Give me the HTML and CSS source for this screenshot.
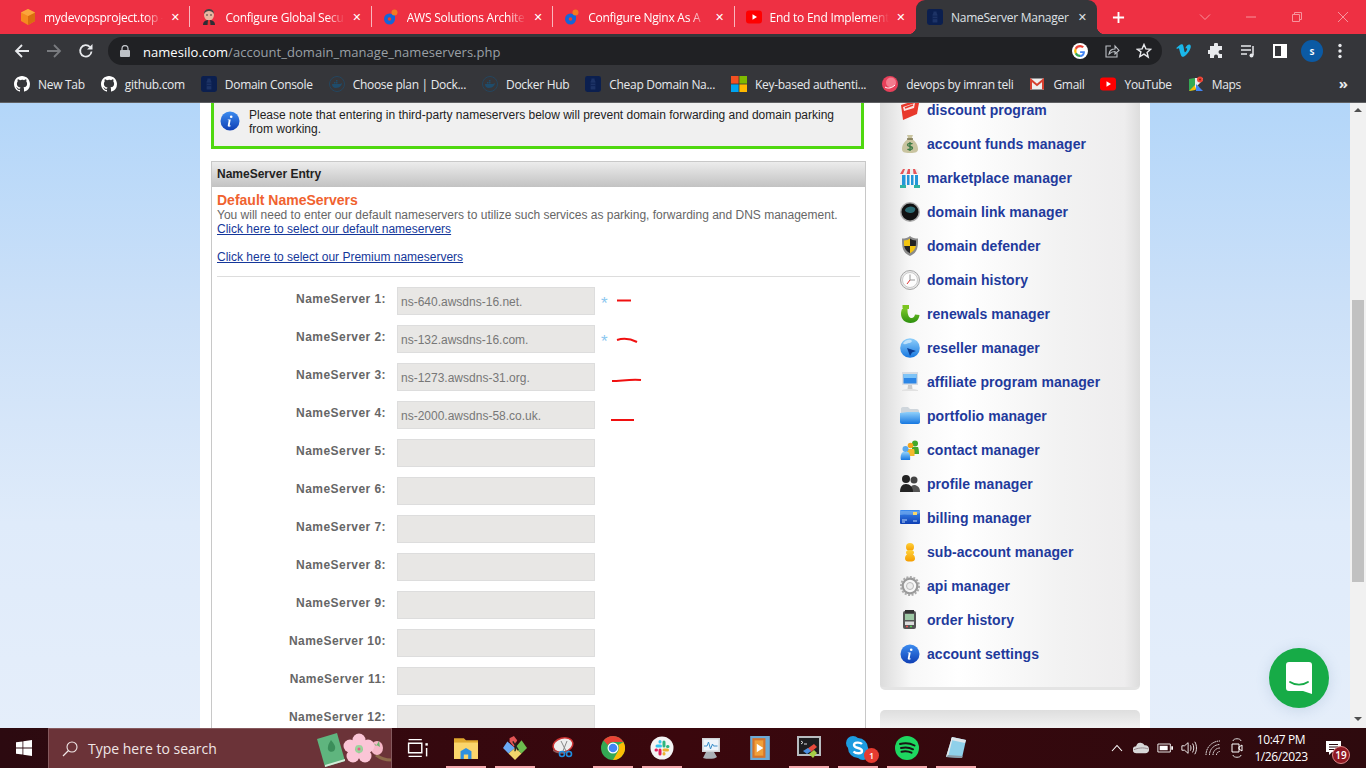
FILE: index.html
```html
<!DOCTYPE html>
<html lang="en">
<head>
<meta charset="utf-8">
<title>NameServer Manager</title>
<link rel="stylesheet" href="styles.css">
</head>
<body>
<svg class="defs" width="0" height="0" aria-hidden="true">
  <defs>
    <symbol id="silo" viewBox="0 0 20 20"><rect width="20" height="20" rx="3" fill="#0b1f4f"/><path d="M8 3h4v2l1 2v10H7V7l1-2z" fill="#1d3366"/><path d="M7 9h6M7 12h6" stroke="#0b1f4f"/></symbol>
    <symbol id="gh" viewBox="0 0 16 16"><path fill="#fff" d="M8 0C3.58 0 0 3.58 0 8c0 3.54 2.29 6.53 5.47 7.59.4.07.55-.17.55-.38v-1.34c-2.23.48-2.7-1.07-2.7-1.07-.36-.92-.89-1.17-.89-1.17-.73-.5.05-.49.05-.49.8.06 1.23.83 1.23.83.71 1.22 1.87.87 2.33.66.07-.52.28-.87.5-1.07-1.78-.2-3.64-.89-3.64-3.95 0-.87.31-1.59.82-2.15-.08-.2-.36-1.02.08-2.12 0 0 .67-.21 2.2.82A7.7 7.7 0 0 1 8 3.87c.68 0 1.36.09 2 .27 1.53-1.04 2.2-.82 2.2-.82.44 1.1.16 1.92.08 2.12.51.56.82 1.27.82 2.15 0 3.07-1.87 3.75-3.65 3.95.29.25.54.73.54 1.48v2.2c0 .21.15.46.55.38A8 8 0 0 0 16 8c0-4.42-3.58-8-8-8z"/></symbol>
    <symbol id="dock" viewBox="0 0 16 16"><circle cx="8" cy="8" r="7.500" fill="none" stroke="#24465f"/><path d="M3 8h8c1 0 1.500-1 2-1-.2 2-2 5-6 5-2.500 0-4-1.500-4-4z" fill="#1f4c6b"/><path d="M5 6h1.500v1.500H5zM7 6h1.500v1.500H7zM7 4h1.500v1.500H7z" fill="#1f4c6b"/></symbol>
    <symbol id="yt" viewBox="0 0 16 16"><rect y="1.500" width="16" height="13" rx="3" fill="#f00"/><path d="M6.500 5.200v5.600L11 8z" fill="#fff"/></symbol>
    <symbol id="dlogo" viewBox="0 0 16 16"><circle cx="6.500" cy="10" r="5.500" fill="#1565d8"/><circle cx="6.500" cy="10" r="1.800" fill="#e8412c"/><path d="M10 5h2v5h-2z" fill="#1565d8"/><circle cx="11.500" cy="3.500" r="3" fill="#f47b20"/></symbol>
    <linearGradient id="gblue" x1="0" y1="0" x2="0" y2="1"><stop offset="0" stop-color="#3c8cf0"/><stop offset="1" stop-color="#0f3fb4"/></linearGradient>
    <linearGradient id="gsky" x1="0" y1="0" x2="0" y2="1"><stop offset="0" stop-color="#8fd0fb"/><stop offset="1" stop-color="#1677e0"/></linearGradient>
    <linearGradient id="ggreen" x1="0" y1="0" x2="0" y2="1"><stop offset="0" stop-color="#8fd52f"/><stop offset="1" stop-color="#2c8f0e"/></linearGradient>
    <linearGradient id="gyel" x1="0" y1="0" x2="0" y2="1"><stop offset="0" stop-color="#ffd23b"/><stop offset="1" stop-color="#f59d00"/></linearGradient>
    <symbol id="info" viewBox="0 0 20 20"><circle cx="10" cy="10" r="9.500" fill="url(#gblue)"/><path d="M8 15.500c2 .5 3-.5 3-.5l-.4-.5c-.6.300-1 .2-.9-.4l1-5.600H7.800l-.1.500c1 .1 1 .3.900.9l-.8 4.300c-.1.800 0 1.100.2 1.300z" fill="#fff"/><circle cx="11.200" cy="5.800" r="1.300" fill="#fff"/></symbol>
  </defs>
</svg>

<header class="browser">
  <div class="tabstrip">
    <div class="tab">
      <svg class="fav" viewBox="0 0 16 16"><path d="M8 0l7 3.500v8.500L8 16l-7-4V3.500z" fill="#f58a1f"/><path d="M8 7l7-3.500V12l-7 4z" fill="#d96d10"/><path d="M8 7L1 3.500 8 0l7 3.500z" fill="#fba53c"/></svg>
      <span class="tab-title">mydevopsproject.top -</span>
      <span class="tab-x">✕</span>
    </div>
    <div class="tab">
      <svg class="fav" viewBox="0 0 16 16"><ellipse cx="8" cy="6" rx="5" ry="5.500" fill="#e8b6a0"/><path d="M3 5c0-4 3-5 5-5s5 1 5 5c-1-2-3-3-5-3S4 3 3 5z" fill="#444"/><path d="M2 16c0-4 3-5 6-5s6 1 6 5z" fill="#2d2d35"/><path d="M7 11h2l.5 5h-3z" fill="#d33"/><circle cx="6" cy="6" r=".8" fill="#333"/><circle cx="10" cy="6" r=".8" fill="#333"/></svg>
      <span class="tab-title">Configure Global Secu</span>
      <span class="tab-x">✕</span>
    </div>
    <div class="tab">
      <svg class="fav"><use href="#dlogo"/></svg>
      <span class="tab-title">AWS Solutions Archite</span>
      <span class="tab-x">✕</span>
    </div>
    <div class="tab">
      <svg class="fav"><use href="#dlogo"/></svg>
      <span class="tab-title">Configure Nginx As A</span>
      <span class="tab-x">✕</span>
    </div>
    <div class="tab tab-last">
      <svg class="fav"><use href="#yt"/></svg>
      <span class="tab-title">End to End Implement</span>
      <span class="tab-x">✕</span>
    </div>
    <div class="tab tab-active">
      <svg class="fav"><use href="#silo"/></svg>
      <span class="tab-title">NameServer Manager</span>
      <span class="tab-x">✕</span>
    </div>
    <svg class="newtab" viewBox="0 0 14 14"><path d="M7 1v12M1 7h12" stroke="#fff" stroke-width="2"/></svg>
    <div class="winctl">
      <svg viewBox="0 0 12 12"><path d="M1 3.500l5 5 5-5" fill="none" stroke="#f7939d"/></svg>
      <svg viewBox="0 0 12 12"><path d="M1 6h10" stroke="#f7939d"/></svg>
      <svg viewBox="0 0 12 12"><path d="M1.500 3.500h7v7h-7zM3.500 3.500v-2h7v7h-2" fill="none" stroke="#f7939d"/></svg>
      <svg viewBox="0 0 12 12"><path d="M1 1l10 10M11 1L1 11" stroke="#f7939d"/></svg>
    </div>
  </div>

  <div class="toolbar">
    <svg class="tb-btn" viewBox="0 0 16 16"><path d="M15 8H2M8 2L2 8l6 6" fill="none" stroke="#e8eaed" stroke-width="1.800"/></svg>
    <svg class="tb-btn" viewBox="0 0 16 16"><path d="M1 8h13M8 2l6 6-6 6" fill="none" stroke="#797b7f" stroke-width="1.800"/></svg>
    <svg class="tb-btn" viewBox="0 0 16 16"><path d="M13.500 8.500A5.700 5.700 0 1 1 12 4" fill="none" stroke="#e8eaed" stroke-width="1.800"/><path d="M14.500 1v5.500H9z" fill="#e8eaed"/></svg>
    <div class="omnibox">
      <svg class="lock" viewBox="0 0 10 12"><path d="M2 5V3.500a3 3 0 0 1 6 0V5" fill="none" stroke="#bdc1c6" stroke-width="1.300"/><rect y="5" width="10" height="7" rx="1" fill="#bdc1c6"/></svg>
      <span class="url"><b>namesilo.com</b>/account_domain_manage_nameservers.php</span>
      <svg class="omni-ico" viewBox="0 0 16 16"><circle cx="8" cy="8" r="8" fill="#fff"/><path d="M12.800 8.200H8.100v1.700h2.700c-.3 1.200-1.400 1.900-2.700 1.900V14c2.600 0 4.800-2 4.800-5 0-.3 0-.6-.1-.8z" fill="#4285f4"/><path d="M4.700 9.500A3.600 3.600 0 0 0 8.100 11.800V14a5.900 5.900 0 0 1-5.300-3.200z" fill="#34a853"/><path d="M2.800 5.200a5.900 5.900 0 0 0 0 5.600l1.900-1.300a3.600 3.600 0 0 1 0-3z" fill="#fbbc05"/><path d="M8.100 2a5.900 5.900 0 0 0-5.300 3.200l1.900 1.300a3.600 3.600 0 0 1 3.400-2.300c.9 0 1.700.3 2.300.9l1.600-1.600A5.800 5.800 0 0 0 8.100 2z" fill="#ea4335"/></svg>
      <svg class="omni-ico" viewBox="0 0 16 16"><path d="M7 3H2v11h11v-4" fill="none" stroke="#bdc1c6" stroke-width="1.100"/><path d="M5 11c.5-3.500 3-5 6-5V3l4 4.500L11 11V8.500c-2.500 0-4.500 1-6 2.500z" fill="none" stroke="#bdc1c6" stroke-width="1.100"/></svg>
      <svg class="omni-ico" viewBox="0 0 16 16"><path d="M8 1.500l1.900 4.400 4.800.4-3.600 3.100 1.100 4.700L8 11.100l-4.200 2.500 1.100-4.700L1.300 6.300l4.800-.4z" fill="none" stroke="#e8eaed" stroke-width="1.400"/></svg>
    </div>
    <div class="tb-right">
      <svg class="tb-btn" viewBox="0 0 16 16"><path d="M.3 5l.7 1c1-.7 1.500-.9 1.900-.5.800.8 1.400 7 3.200 8.200 1.800 1 6-3 8.200-8C16 2 13.500.2 11 2.500 10 3.500 9.500 4.500 9.300 5.500c1.300-.7 2.300-.3 1.700 1.300-.6 1.500-1.600 2.600-2.100 2.400-.8-.3-.9-6-2.300-7.600C5.500.3 2.500 3 .3 5z" fill="#1ab7ea"/></svg>
      <svg class="tb-btn" viewBox="0 0 16 16"><path d="M6 1.500a2 2 0 0 1 4 0V3h4v4h-1.500a2 2 0 0 0 0 4H14v4H10v-1.500a2 2 0 0 0-4 0V15H2v-4H.5a2 2 0 0 1 0-4H2V3h4z" fill="#e8eaed"/></svg>
      <svg class="tb-btn" viewBox="0 0 16 16"><path d="M1 3h10M1 7h10M1 11h6" stroke="#e8eaed" stroke-width="1.500"/><path d="M13 3v9" stroke="#e8eaed" stroke-width="1.500"/><circle cx="11.500" cy="12.500" r="2" fill="#e8eaed"/></svg>
      <svg class="tb-btn" viewBox="0 0 16 16"><path fill="#fff" d="M1 1h14v14H1z"/><path fill="#35363a" d="M3 3h6v10H3z"/></svg>
      <span class="avatar">S</span>
      <svg class="tb-btn" viewBox="0 0 16 16"><circle cx="8" cy="2.500" r="1.700" fill="#e8eaed"/><circle cx="8" cy="8" r="1.700" fill="#e8eaed"/><circle cx="8" cy="13.500" r="1.700" fill="#e8eaed"/></svg>
    </div>
  </div>

  <nav class="bookmarks">
    <a class="bm"><svg><use href="#gh"/></svg>New Tab</a>
    <a class="bm"><svg><use href="#gh"/></svg>github.com</a>
    <a class="bm"><svg><use href="#silo"/></svg>Domain Console</a>
    <a class="bm"><svg><use href="#dock"/></svg>Choose plan | Dock...</a>
    <a class="bm"><svg><use href="#dock"/></svg>Docker Hub</a>
    <a class="bm"><svg><use href="#silo"/></svg>Cheap Domain Na...</a>
    <a class="bm"><svg viewBox="0 0 16 16"><path fill="#f25022" d="M0 0h7.600v7.600H0z"/><path fill="#7fba00" d="M8.400 0H16v7.600H8.400z"/><path fill="#00a4ef" d="M0 8.400h7.600V16H0z"/><path fill="#ffb900" d="M8.400 8.400H16V16H8.400z"/></svg>Key-based authenti...</a>
    <a class="bm"><svg viewBox="0 0 16 16"><circle cx="8" cy="8" r="8" fill="#e8405a"/><circle cx="9" cy="6.500" r="5" fill="#f47c8e"/><path d="M3 11c3 2 7 1 10-2" stroke="#fff" fill="none"/></svg>devops by imran teli</a>
    <a class="bm"><svg viewBox="0 0 16 16"><path fill="#eee" d="M1 2.500h14v11H1z"/><path fill="none" stroke="#d6402f" stroke-width="2" d="M2 13.500V4l6 5 6-5v9.500"/></svg>Gmail</a>
    <a class="bm"><svg><use href="#yt"/></svg>YouTube</a>
    <a class="bm"><svg viewBox="0 0 16 16"><path fill="#34a853" d="M1 3l6-1v12l-6 1z"/><path fill="#fbbc05" d="M7 14l-6 1 7-7 3 3z"/><path fill="#e8eaed" d="M7 2l8 0v2L7 12z"/><path fill="#4285f4" d="M8 8l7 7H8z"/><circle cx="12" cy="3.500" r="3" fill="#ea4335"/><circle cx="12" cy="3.500" r="1" fill="#8a1c12"/></svg>Maps</a>
    <span class="bm-more">»</span>
  </nav>
</header>

<main class="page">
  <div class="viewport">
    <div class="sheet">
      <section class="content">
        <div class="notice">
          <svg class="notice-ico"><use href="#info"/></svg>
          <p>Please note that entering in third-party nameservers below will prevent domain forwarding and domain parking from working.</p>
        </div>
        <div class="entry">
          <h2 class="entry-head">NameServer Entry</h2>
          <div class="entry-body">
            <h3>Default NameServers</h3>
            <p>You will need to enter our default nameservers to utilize such services as parking, forwarding and DNS management.</p>
            <p><a>Click here to select our default nameservers</a></p>
            <p class="spaced"><a>Click here to select our Premium nameservers</a></p>
            <hr>
            <div class="ns-form">
              <label>NameServer 1:</label><div class="field">ns-640.awsdns-16.net.</div><span class="req">*</span>
              <label>NameServer 2:</label><div class="field">ns-132.awsdns-16.com.</div><span class="req">*</span>
              <label>NameServer 3:</label><div class="field">ns-1273.awsdns-31.org.</div><span></span>
              <label>NameServer 4:</label><div class="field">ns-2000.awsdns-58.co.uk.</div><span></span>
              <label>NameServer 5:</label><div class="field"></div><span></span>
              <label>NameServer 6:</label><div class="field"></div><span></span>
              <label>NameServer 7:</label><div class="field"></div><span></span>
              <label>NameServer 8:</label><div class="field"></div><span></span>
              <label>NameServer 9:</label><div class="field"></div><span></span>
              <label>NameServer 10:</label><div class="field"></div><span></span>
              <label>NameServer 11:</label><div class="field"></div><span></span>
              <label>NameServer 12:</label><div class="field"></div><span></span>
            </div>
          </div>
        </div>
      </section>

      <aside class="side">
        <ul class="menu">
          <li><svg viewBox="0 0 20 20"><path d="M1 5l16-5 2 3-2 11-14 6z" fill="#e8392c"/><path d="M3 7l12-4-1 5-10 3z" fill="#fff" opacity=".85"/><path d="M5 8l8-3" stroke="#e8392c" stroke-width="1.500"/></svg>discount program</li>
          <li><svg viewBox="0 0 20 20"><path d="M7 1h6l-1.500 4c4 2 6.500 6 6.500 10 0 3-2 4-8 4s-8-1-8-4c0-4 2.500-8 6.500-10z" fill="#c9c4a0"/><path d="M7 5h6" stroke="#77704a" stroke-width="1.500"/><path d="M12.500 10c-1-1-5-1-5 1s5 1 5 3-4 2-5 1M10 8v9" fill="none" stroke="#3e7a46" stroke-width="1.400"/></svg>account funds manager</li>
          <li><svg viewBox="0 0 20 20"><path d="M3 1h14l3 5H0z" fill="#eee"/><path d="M3 1h2L3 6H0zM8 1h2v5H6.500zM13 1h2l2 5h-3.500z" fill="#e6565a"/><path d="M2 7h3.500v10H2zM7 7h2.500v10H7zM11 7h2.500v10H11zM15 7h3v10h-3z" fill="#2496d8"/><path d="M0 17h6v3H0zM14 17h6v3h-6z" fill="#2fb3a3"/></svg>marketplace manager</li>
          <li><svg viewBox="0 0 20 20"><circle cx="10" cy="10" r="10" fill="#aaa"/><circle cx="10" cy="10" r="8.500" fill="#111"/><path d="M5 8a6 5 0 0 1 10-2c1 2-1 5-4 5S5 10 5 8z" fill="#2b6a72"/></svg>domain link manager</li>
          <li><svg viewBox="0 0 20 20"><path d="M10 0c2 2 5 2.500 8 2.500 0 8 0 14-8 17.500C2 16.500 2 10.500 2 2.500 5 2.500 8 2 10 0z" fill="#8b8b8b"/><path d="M10 2.500v7.500H4.200C4 8 4 6 4 4.400c2.500 0 4.500-.7 6-1.900zM10 10h5.800c-.5 3-2.300 5.200-5.800 7.200z" fill="#f2c40f"/><path d="M10 2.500c1.500 1.200 3.500 1.900 6 1.900 0 2 0 4-.2 5.600H10zM4.200 10H10v7.200C6.500 15.200 4.700 13 4.200 10z" fill="#222"/></svg>domain defender</li>
          <li><svg viewBox="0 0 20 20"><circle cx="10" cy="10" r="9.500" fill="#e8e8e8" stroke="#a5a5a5"/><circle cx="10" cy="10" r="7.500" fill="#fdfdfd" stroke="#ccc"/><path d="M10 4.500V10h5" stroke="#999" fill="none"/><path d="M10 10l-3 4" stroke="#d33"/></svg>domain history</li>
          <li><svg viewBox="0 0 20 20"><path d="M3 1h6v4H7.500v1.500c0 5 2 7.500 4 7.500s3-1.500 3.500-3.500l4.500.5C19 16 15.500 19 10.500 19 5 19 1 15 1 10c0-2 .5-4 1-5H3z" fill="url(#ggreen)"/><path d="M2.500 1H9v3.500H2.500z" fill="#7bc41f"/></svg>renewals manager</li>
          <li><svg viewBox="0 0 20 20"><circle cx="10" cy="10" r="9.800" fill="url(#gsky)"/><path d="M3 5c2-3 6-4 8-3 2 1 0 3-2 3S5 8 3 5z" fill="#cfeafd" opacity=".8"/><path d="M7 10l9 3-4 1.500L10 18z" fill="#0a3d94"/></svg>reseller manager</li>
          <li><svg viewBox="0 0 20 20"><path d="M2 0h16v13H2z" fill="#d8dce2"/><path d="M3.500 2h13v9.500h-13z" fill="#2c86e6"/><path d="M3.500 2h13v4h-13z" fill="#7ec4f7"/><path d="M8 13h4l.5 4h-5z" fill="#ccc"/><path d="M2 18c2-1.500 14-1.500 16 0v1H2z" fill="#e2e2e2"/></svg>affiliate program manager</li>
          <li><svg viewBox="0 0 20 20"><path d="M1 3c0-1 .5-2 2-2h5l2 2h7c1.500 0 2 1 2 2v11c0 1-.5 2-2 2H3c-1 0-2-1-2-2z" fill="#cfd6dc"/><path d="M0 7c3 0 5-1 7-1h11c1 0 2 .5 2 2v8c0 1-1 2-2 2H2c-1 0-2-1-2-2z" fill="url(#gsky)"/></svg>portfolio manager</li>
          <li><svg viewBox="0 0 20 20"><circle cx="15" cy="3.500" r="3" fill="#43a82b"/><path d="M12 7h6c1 2 1 6 1 7h-7z" fill="#43a82b"/><circle cx="10.500" cy="5.500" r="2.800" fill="#f4a61d"/><path d="M7 9h7c1 2 .5 6 .5 7H7z" fill="#f4b92d"/><circle cx="5.500" cy="9" r="3" fill="#5aa9ee"/><path d="M1 20c-1-3 0-7 2-8h5c2 1 2.500 5 2 8z" fill="url(#gsky)"/></svg>contact manager</li>
          <li><svg viewBox="0 0 20 20"><circle cx="6" cy="5" r="4" fill="#222"/><circle cx="14" cy="6" r="3.500" fill="#444"/><path d="M10 18c0-4 1-7 4-7 3 0 6 2 6 7z" fill="#555"/><path d="M0 18c0-5 2-8 6-8s7 3 7 8z" fill="#222"/></svg>profile manager</li>
          <li><svg viewBox="0 0 20 20"><rect y="2" width="20" height="14" rx="1" fill="url(#gblue)"/><path d="M0 7c6-2 12 2 20-2v-2H0z" fill="#7fb2ee" opacity=".6"/><rect x="13" y="4" width="4" height="3" fill="#f6d76b"/><path d="M2 12h5M2 14h3M13 13h4" stroke="#bcd6f8"/></svg>billing manager</li>
          <li><svg viewBox="0 0 20 20"><circle cx="10" cy="5" r="4" fill="url(#gyel)"/><path d="M10 8c-3 0-4 1-4 2.500 0 1 .5 1.500 1 2-1.500 1-2 2.500-2 4 0 2.500 2 3 5 3s5-.5 5-3c0-1.500-.5-3-2-4 .5-.5 1-1 1-2C14 9 13 8 10 8z" fill="url(#gyel)"/></svg>sub-account manager</li>
          <li><svg viewBox="0 0 20 20"><circle cx="10" cy="10" r="7.300" fill="none" stroke="#999" stroke-width="2.200"/><circle cx="10" cy="10" r="9" fill="none" stroke="#aaa" stroke-width="2" stroke-dasharray="2 1.500"/><circle cx="10" cy="10" r="3.500" fill="#eee" stroke="#bbb"/></svg>api manager</li>
          <li><svg viewBox="0 0 20 20"><rect x="3" y="1" width="13" height="18" rx="2" fill="#555"/><path d="M5 0h9v3H5z" fill="#333"/><rect x="5" y="4" width="9" height="6" fill="#9dc8a4"/><rect x="5" y="11.500" width="9" height="3.500" fill="#ddd"/><path d="M6 16.500h2" stroke="#e55" stroke-width="1.500"/><path d="M10 16.500h2" stroke="#5c5" stroke-width="1.500"/></svg>order history</li>
          <li><svg viewBox="0 0 20 20"><use href="#info"/></svg>account settings</li>
        </ul>
        <div class="side-next"></div>
      </aside>
    </div>

    <svg class="scribbles" viewBox="0 0 60 130" aria-hidden="true">
      <path d="M6 3.500h14" />
      <path d="M6 43c6-2 14-1 20 2" />
      <path d="M1 84c9 0 18-2 29-1" />
      <path d="M0 123h23" />
    </svg>
    <div class="chat">
      <svg viewBox="0 0 28 32"><path d="M4 0h20c2 0 3 1 3 3v29l-9-3H4c-2 0-3-1-3-3V3c0-2 1-3 3-3z" fill="#fff"/><path d="M5 20c5 3.500 13 3.500 18 0" fill="none" stroke="#17ab47" stroke-width="1.800" stroke-linecap="round"/></svg>
    </div>
  </div>
  <div class="scrollbar">
    <span class="arrow arrow-up"></span>
    <span class="thumb"></span>
    <span class="arrow arrow-down"></span>
  </div>
</main>

<footer class="taskbar">
  <svg class="start" viewBox="0 0 16 16"><path fill="#fff" d="M0 2.300l6.500-.9v6.200H0zM7.300 1.300L16 0v7.600H7.300zM0 8.400h6.500v6.200L0 13.700zM7.300 8.400H16V16l-8.700-1.200z"/></svg>
  <div class="search">
    <svg class="search-ico" viewBox="0 0 16 16"><circle cx="10" cy="6" r="5" fill="none" stroke="#f0e6e6" stroke-width="1.100"/><path d="M6.500 9.500L1 15" stroke="#f0e6e6" stroke-width="1.200"/></svg>
    <span>Type here to search</span>
    <svg class="search-art" viewBox="0 0 76 38">
      <path d="M2 8L22 2l8 28-20 6z" fill="#5fb57e"/><path d="M10 36l20-6v-2l-20 6z" fill="#d6ecd9"/>
      <path d="M16 9c3 4 6 7 3 11-3 2-7 0-6-4 0-3 2-5 3-7z" fill="#3b8e5a"/>
      <path d="M61 24c4 3 9 5 15 5" stroke="#8d6a4a" stroke-width="3" fill="none"/>
      <ellipse cx="62" cy="17" rx="6" ry="7" fill="#f7b7c8"/><path d="M58 12l3 3 3-5 1 6" fill="#6fb56f"/>
      <g fill="#fbc5d6"><circle cx="44" cy="9" r="6.500"/><circle cx="53" cy="15" r="6.500"/><circle cx="50" cy="25" r="6.500"/><circle cx="38" cy="25" r="6.500"/><circle cx="35" cy="15" r="6.500"/></g>
      <circle cx="44" cy="18" r="4" fill="#9bd39b"/><circle cx="44" cy="18" r="1.500" fill="#e85a8a"/>
    </svg>
  </div>
  <div class="task">
    <svg viewBox="0 0 20 20"><path d="M3 3h11M3 17h11M3 6h11v8H3z" fill="none" stroke="#fff" stroke-width="1.200"/><path d="M17 6h2v2h-2z" fill="#fff"/><path d="M18 10v7" stroke="#fff" stroke-width="1.200"/></svg>
  </div>
  <div class="task active">
    <svg viewBox="0 0 22 20"><path d="M0 1h9l2 2h11v17H0z" fill="#e0a82e"/><path d="M0 5h22v15H0z" fill="#fbd56b"/><path d="M6 20v-7l5-3 5 3v7h-3v-4H9v4z" fill="#2e8fe0"/></svg>
  </div>
  <div class="task active">
    <svg viewBox="0 0 22 22"><path d="M11 11L4 5l-4 6 5 5z" fill="#6ba9f4"/><path d="M11 11l6-7 5 7-5 5z" fill="#6cbd4e"/><path d="M11 11l-6 5 6 6 6-6z" fill="#f2d66b"/><path d="M6 2l4-2 3 4-3 6-4-5z" fill="#e25555"/><path d="M9 5l5 8M12 6l-1 8" stroke="#222" stroke-width="1.300"/></svg>
  </div>
  <div class="task">
    <svg viewBox="0 0 24 22"><ellipse cx="11" cy="8" rx="10" ry="7" transform="rotate(-15 11 8)" fill="#eee" stroke="#c33" stroke-width="1.500"/><path d="M1 12c3 4 10 4 16 1v2c-6 3-12 2-16-1z" fill="#8d5a5a"/><path d="M9 4l5 10M15 4l-4 10" stroke="#888"/><circle cx="10" cy="17" r="2.500" fill="none" stroke="#1f8ee0" stroke-width="1.600"/><circle cx="17" cy="17" r="2.500" fill="none" stroke="#1f8ee0" stroke-width="1.600"/></svg>
  </div>
  <div class="task active">
    <svg viewBox="0 0 24 24"><circle cx="12" cy="12" r="12" fill="#34a853"/><path d="M12 0a12 12 0 0 1 10.400 6H12a6 6 0 0 0-5.200 3L2.600 4.600A12 12 0 0 1 12 0z" fill="#ea4335"/><path d="M22.400 6A12 12 0 0 1 12 24l5.200-9a6 6 0 0 0 0-6z" fill="#fbbc05"/><circle cx="12" cy="12" r="5.500" fill="#fff"/><circle cx="12" cy="12" r="4.300" fill="#4285f4"/></svg>
  </div>
  <div class="task active">
    <svg viewBox="0 0 24 24"><circle cx="12" cy="12" r="11.500" fill="#f4f4f4"/><g stroke-width="3" stroke-linecap="round"><path d="M7 10h3.500M10 5.500v.5" stroke="#36c5f0"/><path d="M14 6v4M18 10.500h-.5" stroke="#2eb67d"/><path d="M14 14h3.500M14 18v-.5" stroke="#ecb22e"/><path d="M10 14v4M6 14h.5" stroke="#e01e5a"/></g></svg>
  </div>
  <div class="task">
    <svg viewBox="0 0 24 24"><path d="M3 2h18v14H3z" fill="#d0d4d8"/><path d="M4.500 3.500h15v11h-15z" fill="#eef4fb"/><path d="M5 10h3l1.500-4 2 7 2-5 1 2h4" fill="none" stroke="#3a8dc9"/><path d="M7 16l-3 6c5 1.500 12 1 14-1l-3-5z" fill="#aab0b6"/></svg>
  </div>
  <div class="task">
    <svg viewBox="0 0 22 22"><path d="M2 0h18v22H2z" fill="#6caad6"/><path d="M4 2h12v18H4z" fill="#d5742a"/><path d="M6 4h8v14H6z" fill="#f0a03a"/><path d="M8 7l6 4-6 4z" fill="#fff"/></svg>
  </div>
  <div class="task active">
    <svg viewBox="0 0 24 24"><path d="M0 0h24v20H0z" fill="#b8bcc0"/><path d="M2 2h20v16H2z" fill="#1d1d20"/><path d="M4 5l2 1.500L4 8M7 8h3" stroke="#ddd" fill="none"/><path d="M10 13l7-5 3 3-6 5z" fill="#e84a3c"/><path d="M6 15l5-3 3 3-4 3z" fill="#4a8fe0"/><path d="M12 18l5-4 3 3-4 5z" fill="#a7cf45"/></svg>
  </div>
  <div class="task active skype">
    <svg viewBox="0 0 24 24"><circle cx="7" cy="7" r="7" fill="#1d9ce0"/><circle cx="17" cy="17" r="7" fill="#1d9ce0"/><circle cx="12" cy="12" r="10" fill="#1d9ce0"/><path d="M16 8c-2-2-8-2-8 1 0 4 8 2 8 6 0 3-6 3-8.500 .5" fill="none" stroke="#fff" stroke-width="2.400"/></svg>
    <span class="skype-badge">1</span>
  </div>
  <div class="task active">
    <svg viewBox="0 0 24 24"><circle cx="12" cy="12" r="12" fill="#1ed760"/><path d="M5 8c5-1.500 10-1 14.500 1.500M6 12c4-1 8.500-.6 12 1.300M6.500 15.700c3.500-.8 7-.5 10 1" fill="none" stroke="#191414" stroke-width="2" stroke-linecap="round"/></svg>
  </div>
  <div class="task active">
    <svg viewBox="0 0 24 24"><path d="M8 1l14 3-4 18-16-1z" fill="#8fd0ea"/><path d="M8 1l14 3-1 3L7 4z" fill="#dfe5ea"/><path d="M2 21l6-20v4L4 21z" fill="#e6e8ea"/><path d="M2 21l16 1 .5-2L4 19z" fill="#8a9aa6"/></svg>
  </div>
  <div class="tray">
    <svg class="tr-chev" viewBox="0 0 12 8"><path d="M1 7l5-5.500L11 7" fill="none" stroke="#fff" stroke-width="1.100"/></svg>
    <svg class="tr-ico" viewBox="0 0 18 12"><path d="M4 12a4 4 0 0 1-.5-8A5 5 0 0 1 13 3a4.500 4.500 0 0 1 1 9z" fill="#d8d8d8"/><path d="M1 8c4-2 11-3 16-1" stroke="#8f8085" fill="none"/></svg>
    <svg class="tr-ico" viewBox="0 0 18 12"><path d="M1 1.500h14v9H1z" fill="none" stroke="#fff"/><path d="M3 3.500h9v5H3z" fill="#fff"/><path d="M16 4h2v4h-2z" fill="#fff"/></svg>
    <svg class="tr-ico" viewBox="0 0 18 16"><path d="M1 5.500h3L8 2v12L4 10.500H1z" fill="none" stroke="#fff"/><path d="M10.500 5c1 2 1 4 0 6M13 3c1.800 3 1.800 7 0 10M15.500 1c2.500 4 2.500 10 0 14" fill="none" stroke="#fff"/></svg>
    <svg class="tr-ico" viewBox="0 0 16 16"><path d="M1 15A14 14 0 0 1 15 1M4.500 15A10.500 10.500 0 0 1 15 4.500M8 15a7 7 0 0 1 7-7M11.500 15a3.500 3.500 0 0 1 3.500-3.500" fill="none" stroke="#fff" stroke-dasharray="1.500 .8"/></svg>
    <svg class="tr-ico tr-tall" viewBox="0 0 14 22"><path d="M3 4c0-3 8-3 8 0M3 18c0 3 8 3 8 0" fill="none" stroke="#ddd"/><path d="M2 7h7v8H2zM9 10l3-2v6l-3-2z" fill="none" stroke="#fff"/></svg>
    <div class="clock"><span>10:47 PM</span><span>1/26/2023</span></div>
    <div class="notif">
      <svg viewBox="0 0 18 17"><path d="M1 1h15v11H7l-3 3v-3H1z" fill="#fff"/><path d="M4 4.500h9M4 7h9M4 9.500h6" stroke="#2a070c"/></svg>
      <span class="notif-badge">19</span>
    </div>
  </div>
</footer>
</body>
</html>
```

FILE: styles.css
```css
* { box-sizing: border-box; }
html, body { margin: 0; height: 100%; overflow: hidden; }
body {
  width: 1366px;
  height: 768px;
  display: flex;
  flex-direction: column;
  font-family: "Liberation Sans", Arial, sans-serif;
}
.defs { position: absolute; }
ul { list-style: none; margin: 0; padding: 0; }
h2, h3, p { margin: 0; }

/* browser chrome */
.browser { flex: none; height: 103px; background: #35363a; border-bottom: 1px solid #5f6063; font-family: "Open Sans", sans-serif; }
.tabstrip { height: 34px; background: #ee3043; display: flex; align-items: center; padding-left: 9px; }
.tab { position: relative; flex: none; width: 181.4px; height: 34px; display: flex; align-items: center; padding: 0 3px 0 11px; color: #fff; font-size: 12px; }
.tab::after { content: ""; position: absolute; right: 0; top: 6px; bottom: 7px; width: 1px; background: rgba(255,255,255,.65); }
.tab-last::after { display: none; }
.fav { width: 16px; height: 16px; flex: none; margin-right: 8px; }
.tab-title { flex: 1; overflow: hidden; white-space: nowrap; -webkit-mask-image: linear-gradient(90deg, #000 85%, transparent); mask-image: linear-gradient(90deg, #000 85%, transparent); letter-spacing: -.25px; }
.tab-x { flex: none; width: 24px; text-align: center; font-size: 11px; font-weight: 700; font-family: "DejaVu Sans", sans-serif; }
.tab-active { background: #35363a; color: #dfe1e5; border-radius: 9px 9px 0 0; }
.tab-active::before { content: ""; position: absolute; bottom: 0; left: -8px; width: 8px; height: 8px; background: radial-gradient(circle at 0 0, #ee3043 8px, #35363a 8.5px); }
.tab-active::after { top: auto; bottom: 0; right: -8px; width: 8px; height: 8px; background: radial-gradient(circle at 100% 0, #ee3043 8px, #35363a 8.5px); }
.tab-active .tab-title { -webkit-mask-image: none; mask-image: none; }
.newtab { width: 13px; height: 13px; margin-left: 15px; flex: none; }
.winctl { margin-left: auto; display: flex; gap: 34px; padding-right: 17px; }
.winctl svg { width: 12px; height: 12px; }

.toolbar { height: 34px; display: flex; align-items: center; padding: 0 14px; }
.tb-btn { width: 16px; height: 16px; flex: none; margin-right: 16px; }
.omnibox { flex: none; width: 1054px; height: 28px; margin-left: -2px; margin-right: 14px; border-radius: 14px; background: #202124; display: flex; align-items: center; padding: 0 10px 0 12px; }
.lock { width: 10px; height: 12px; margin-right: 13px; flex: none; }
.url { flex: 1; padding-top: 1px; font-size: 13px; letter-spacing: .04px; color: #9aa0a6; }
.url b { font-weight: 400; color: #fff; }
.omni-ico { width: 16px; height: 16px; margin-left: 16px; flex: none; }
.tb-right { display: flex; align-items: center; flex: none; }
.avatar { width: 22px; height: 22px; margin: 0 9px 0 -3px; border-radius: 50%; background: #0b5aa4; color: #fff; font-size: 9px; font-weight: 700; display: flex; align-items: center; justify-content: center; }

.bookmarks { height: 34px; display: flex; align-items: center; gap: 16px; padding: 0 0 2px 14px; color: #e8eaed; font-size: 12px; position: relative; }
.bm { display: flex; align-items: center; gap: 8px; white-space: nowrap; letter-spacing: -.3px; }
.bm svg { width: 16px; height: 16px; flex: none; }
.bm-more { position: absolute; right: 18px; top: 5px; font-size: 15px; font-weight: 700; }

/* page */
.page { flex: 1; min-height: 0; display: flex; }
.viewport { position: relative; flex: 1; overflow: hidden; background: linear-gradient(#b3d6f9 0, #cbe0f8 200px, #dfebfa 420px, #e5eefa 625px); }
.scrollbar { width: 16px; position: relative; background: #f1f1f1; }
.thumb { position: absolute; left: 2px; right: 2px; top: 197px; height: 282px; background: #c1c1c1; }
.arrow { position: absolute; left: 4px; width: 0; height: 0; border-left: 4px solid transparent; border-right: 4px solid transparent; }
.arrow-up { top: 5px; border-bottom: 4px solid #505050; }
.arrow-down { bottom: 7px; border-top: 4px solid #505050; }

.sheet { width: 950px; margin: 0 auto; height: 100%; background: #fff; display: flex; gap: 14px; padding-left: 11px; overflow: hidden; }
.content { width: 655px; flex: none; margin-top: -10px; font-size: 12px; line-height: 14px; }
.notice { width: 653px; border: 3px solid #4fd80f; background: #f0f0f0; display: flex; align-items: flex-start; padding: 12px 24px 10px 6px; color: #222; }
.notice-ico { width: 20px; height: 20px; flex: none; margin: 3px 9px 0 0; }
.entry { margin-top: 12px; border: 1px solid #c8c8c8; }
.entry-head { height: 25px; padding-left: 5px; font-size: 12px; line-height: 24px; font-weight: 700; color: #222; background: linear-gradient(#ececec, #c2c2c2); }
.entry-body { padding: 6px 5px 0; color: #666; }
.entry-body h3 { font-size: 14px; line-height: 14px; margin-bottom: 1px; font-weight: 700; color: #f0622f; }
.entry-body a { color: #15379a; text-decoration: underline; }
.spaced { margin-top: 14px; }
.entry-body hr { height: 1px; border: 0; background: #ddd; margin: 12px 0 10px; }
.ns-form { display: grid; grid-template-columns: 169px 198px 1fr; column-gap: 11px; row-gap: 10px; grid-auto-rows: 28px; }
.ns-form label { text-align: right; font-size: 12px; line-height: 25px; font-weight: 700; color: #666; letter-spacing: .45px; }
.field { border: 1px solid #ddd; background: #e8e7e5; padding: 0 3px; line-height: 28px; color: #777; }
.req { margin-left: -5px; color: #8cc8f0; font-size: 17px; line-height: 34px; }

.side { width: 260px; flex: none; margin-top: -10px; font-size: 14px; }
.menu { height: 597px; padding: 0 0 19px 20px; border-radius: 0 0 5px 5px; border-bottom: 3px solid #e4e4e4; background: linear-gradient(90deg, #dcdcdc 0, #f8f8f8 12%, #fff 30%, #f2f2f2 70%, #eeedee 94%, #dddddd 100%); }
.menu li { height: 34px; display: flex; align-items: center; gap: 7px; color: #1f3a9c; font-weight: 700; letter-spacing: .05px; white-space: nowrap; }
.menu svg { width: 20px; height: 20px; flex: none; }
.side-next { height: 120px; margin-top: 20px; border-radius: 5px 5px 0 0; background: linear-gradient(#dedede, #f4f4f4 20px); }

.scribbles { position: absolute; left: 611px; top: 194px; width: 60px; height: 130px; fill: none; stroke: #f01010; stroke-width: 2; }
.chat { position: absolute; left: 1269px; top: 545px; width: 60px; height: 60px; border-radius: 50%; background: #17ab47; box-shadow: 0 2px 14px rgba(80,120,160,.2); display: flex; align-items: center; justify-content: center; }
.chat svg { width: 28px; height: 32px; }

/* taskbar */
.taskbar { flex: none; height: 40px; display: flex; align-items: center; background: linear-gradient(90deg, #2c0a10, #3a070d 50%, #2e0a0e); color: #fff; font-family: "Open Sans", sans-serif; }
.start { width: 16px; height: 16px; margin: 0 16px; flex: none; }
.search { width: 344px; height: 40px; background: #6b3338; border: 1px solid #85595d; border-width: 1px 1px 0; display: flex; align-items: center; position: relative; color: #f0e6e6; font-size: 14px; flex: none; }
.search-ico { width: 16px; height: 16px; margin: 0 10px 0 13px; flex: none; }
.search-art { position: absolute; right: 0; top: 2px; width: 76px; height: 38px; }
.task { position: relative; width: 49px; height: 40px; flex: none; display: flex; align-items: center; justify-content: center; }
.task svg { width: 24px; height: 24px; }
.task.active::after { content: ""; position: absolute; left: 5px; right: 4px; bottom: 0; height: 2px; background: #f4a9ad; }
.skype-badge { position: absolute; left: 31px; top: 20px; width: 15px; height: 15px; border-radius: 50%; background: #e53b30; font-size: 9px; line-height: 15px; text-align: center; font-weight: 600; }
.tray { margin-left: auto; display: flex; align-items: center; height: 40px; }
.tray svg { flex: none; }
.tr-chev { width: 12px; height: 8px; margin-right: 10px; }
.tr-ico { width: 16px; height: 16px; margin-right: 8px; }
.tr-tall { height: 22px; }
.clock { width: 74px; margin-left: -9px; text-align: center; font-size: 12px; line-height: 17px; display: flex; flex-direction: column; letter-spacing: -.4px; }
.notif { position: relative; width: 48px; height: 40px; display: flex; align-items: center; padding-left: 7px; }
.notif svg { width: 18px; height: 17px; }
.notif-badge { position: absolute; left: 14px; top: 18px; width: 18px; height: 18px; border-radius: 50%; background: #8f1822; border: 1px solid #d88; font-size: 10px; line-height: 16px; text-align: center; font-weight: 600; }
```
